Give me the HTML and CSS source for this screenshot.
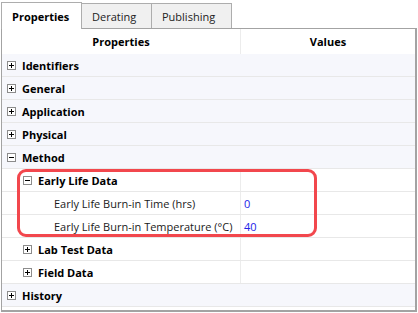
FILE: index.html
```html
<!DOCTYPE html>
<html lang="en">
<head>
  <meta charset="UTF-8">
  <title>Properties</title>
  <link rel="stylesheet" href="styles.css">
</head>
<body>
  <div class="pg-tabs">
    <div class="pg-tab active">Properties</div>
    <div class="pg-tab">Derating</div>
    <div class="pg-tab">Publishing</div>
  </div>
  <div class="pg-panel">
    <div class="pg-head">
      <div class="pg-head-cell">Properties</div>
      <div class="pg-head-cell values">Values</div>
    </div>
    <!-- top level categories -->
    <div class="pg-row cat"><span class="pg-toggle plus"></span><span class="pg-label">Identifiers</span></div>
    <div class="pg-row cat"><span class="pg-toggle plus"></span><span class="pg-label">General</span></div>
    <div class="pg-row cat"><span class="pg-toggle plus"></span><span class="pg-label">Application</span></div>
    <div class="pg-row cat"><span class="pg-toggle plus"></span><span class="pg-label">Physical</span></div>
    <div class="pg-row cat"><span class="pg-toggle"></span><span class="pg-label">Method</span></div>
    <!-- highlighted group -->
    <div class="pg-group highlight">
      <div class="pg-row sub">
        <div class="pg-name lvl2"><span class="pg-toggle"></span><span class="pg-label">Early Life Data</span></div>
        <div class="pg-value"></div>
      </div>
      <div class="pg-row sub">
        <div class="pg-name lvl3">Early Life Burn-in Time (hrs)</div>
        <div class="pg-value">0</div>
      </div>
      <div class="pg-row sub">
        <div class="pg-name lvl3">Early Life Burn-in Temperature (°C)</div>
        <div class="pg-value">40</div>
      </div>
    </div>
    <div class="pg-row sub">
      <div class="pg-name lvl2"><span class="pg-toggle plus"></span><span class="pg-label">Lab Test Data</span></div>
      <div class="pg-value"></div>
    </div>
    <div class="pg-row sub">
      <div class="pg-name lvl2"><span class="pg-toggle plus"></span><span class="pg-label">Field Data</span></div>
      <div class="pg-value"></div>
    </div>
    <div class="pg-row cat"><span class="pg-toggle plus"></span><span class="pg-label">History</span></div>
  </div>
</body>
</html>
```

FILE: styles.css
```css
body { margin: 0; font-family: "Open Sans", "Noto Sans", sans-serif; font-size: 11px; color: #111; background: #fff; }

/* Tabs */
.pg-tabs { display: flex; align-items: flex-end; height: 28px; padding-left: 1px; }
.pg-tab { height: 25px; box-sizing: border-box; padding: 0 11px; display: flex; align-items: center; background: #f0f0f0; border: 1px solid #adadad; border-bottom: none; border-left: none; color: #222; }
.pg-tab:nth-child(2) { width: 70px; padding-left: 10px; }
.pg-tab:nth-child(3) { width: 80px; padding-left: 10px; }
.pg-tab.active { height: 27px; width: 81px; background: #fff; border-left: 1px solid #adadad; font-weight: bold; color: #000; margin-bottom: -1px; position: relative; z-index: 1; padding-top: 0; padding-left: 10px; }

/* Panel */
.pg-panel { margin-left: 1px; width: 416px; box-sizing: border-box; border: 1px solid #a3a3a3; border-right: 2px solid #a3a3a3; border-bottom: 2px solid #a3a3a3; padding-bottom: 3px; background: #fff; }
.pg-head { display: grid; grid-template-columns: 238px 1fr; height: 25px; }
.pg-head-cell { display: flex; align-items: center; justify-content: center; font-weight: bold; color: #000; }
.pg-head-cell.values { border-left: 1px solid #ececec; }

.pg-row { height: 22px; border-bottom: 1px solid #e8e8e8; display: flex; align-items: center; }
.pg-row.cat { background: #f6f7fc; padding-left: 5px; }
.pg-row.sub { display: grid; grid-template-columns: 238px 1fr; background: #fff; }
.pg-name { display: flex; align-items: center; height: 100%; color: #1a1a1a; }
.pg-name.lvl2 { padding-left: 21px; }
.pg-name.lvl3 { padding-left: 52px; }
.pg-value { height: 100%; border-left: 1px solid #ececec; display: flex; align-items: center; padding-left: 3px; color: #2222e8; }
.pg-label { font-weight: bold; color: #000; }

/* plus / minus box */
.pg-toggle { width: 9px; height: 9px; box-sizing: border-box; border: 1px solid #8c8c8c; background: #fff; position: relative; margin-right: 6px; flex: none; }
.pg-toggle::before { content: ""; position: absolute; left: 1px; top: 3px; width: 5px; height: 1px; background: #000; }
.pg-toggle.plus::after { content: ""; position: absolute; left: 3px; top: 1px; width: 1px; height: 5px; background: #000; }

/* highlighted group */
.pg-group.highlight { position: relative; }
.pg-group.highlight::after { content: ""; position: absolute; left: 15px; top: 0; width: 300px; height: 68px; box-sizing: border-box; border: 3px solid #f2474d; border-radius: 9px; pointer-events: none; }
```
